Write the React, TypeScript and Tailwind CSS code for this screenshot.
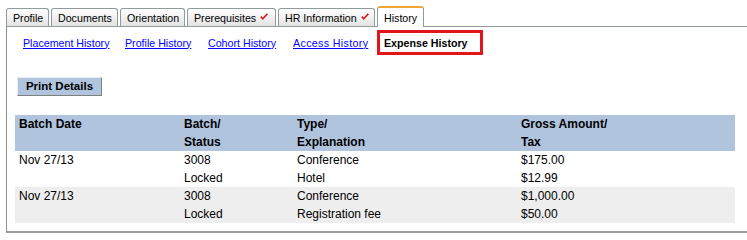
import React from 'react';

type Tab = { label: string; width: string; checked?: boolean };

const tabs: Tab[] = [
  { label: 'Profile', width: 'w-[43px]' },
  { label: 'Documents', width: 'w-[67px]' },
  { label: 'Orientation', width: 'w-[65px]' },
  { label: 'Prerequisites', width: 'w-[89px]', checked: true },
  { label: 'HR Information', width: 'w-[97px]', checked: true },
];

// widths taken from the screenshot so the red box lands in the right spot
const subLinks = [
  { label: 'Placement History', cls: 'w-[86px]' },
  { label: 'Profile History', cls: 'w-[67px]' },
  { label: 'Cohort History', cls: 'w-[69px]' },
  { label: 'Access History', cls: 'w-[75px] tracking-[0.35px]' },
];

const rows = [
  { date: 'Nov 27/13', batch: '3008', status: 'Locked', type: 'Conference', expl: 'Hotel', gross: '$175.00', tax: '$12.99' },
  { date: 'Nov 27/13', batch: '3008', status: 'Locked', type: 'Conference', expl: 'Registration fee', gross: '$1,000.00', tax: '$50.00' },
];

function Check() {
  return (
    <svg width="8" height="7" viewBox="0 0 8 7" className="ml-[4px] mt-[-2px]">
      <path d="M0.8 3.6 L2.8 5.8 L7.4 0.8" fill="none" stroke="#e0141c" strokeWidth="1.6" />
    </svg>
  );
}

export default function App() {
  return (
    <div className="w-[747px] h-[240px] bg-white font-['Liberation_Sans',Arial,sans-serif] text-black overflow-hidden">
      <div className="pt-[6px] pl-[6px]">
        {/* tab strip */}
        <div className="flex items-end gap-[2px] h-[20px] text-[10.67px]">
          {tabs.map((t) => (
            <div
              key={t.label}
              className={`${t.width} h-[18px] flex items-center pl-[6px] border border-b-0 border-[#919b9c] rounded-t-[3px] bg-linear-to-b from-white to-[#e3e3e3]`}
            >
              {t.label}
              {t.checked && <Check />}
            </div>
          ))}
          <div className="relative z-10 w-[47px] h-[21px] -mb-px flex items-center pl-[6px] border border-b-0 border-[#919b9c] border-t-2 border-t-[#f0a830] rounded-t-[3px] bg-white">
            History
          </div>
        </div>

        {/* panel */}
        <div className="border-t border-t-[#919b9c] border-l border-l-[#8e8e8e] border-b-2 border-b-[#9a9a9a] pl-[8px] pb-[8px]">
          <div className="flex items-center mt-[3px] h-[25px] pl-[8px] text-[10.67px]">
            <div className="flex gap-[16px]">
              {subLinks.map((l) => (
                <span key={l.label} className={`${l.cls} text-[#0000ff] underline whitespace-nowrap`}>
                  {l.label}
                </span>
              ))}
            </div>
            <div className="ml-[9px] h-[25px] w-[106px] flex items-center pl-[4px] border-[3px] border-[#e3141c] font-bold">
              Expense History
            </div>
          </div>

          <button className="mt-[22px] ml-[2px] h-[19px] w-[85px] bg-[#b0c4de] border border-t-[#e8edf3] border-l-[#e8edf3] border-r-[#7f7f7f] border-b-[#7f7f7f] text-[11.5px] font-bold leading-none">
            Print Details
          </button>

          <div className="mt-[18px] w-[720px] text-[12px] leading-[18px]">
            <div className="grid grid-cols-[165px_113px_224px_218px] bg-[#b0c4de] font-bold">
              <div className="pl-[4px]">Batch Date</div>
              <div className="pl-[4px]">Batch/<br />Status</div>
              <div className="pl-[4px]">Type/<br />Explanation</div>
              <div className="pl-[4px]">Gross Amount/<br />Tax</div>
            </div>
            {rows.map((r, i) => (
              <div
                key={i}
                className={`grid grid-cols-[165px_113px_224px_218px] ${i % 2 === 1 ? 'bg-[#eeeeee]' : 'bg-white'}`}
              >
                <div className="pl-[4px]">{r.date}</div>
                <div className="pl-[4px]">{r.batch}<br />{r.status}</div>
                <div className="pl-[4px]">{r.type}<br />{r.expl}</div>
                <div className="pl-[4px]">{r.gross}<br />{r.tax}</div>
              </div>
            ))}
          </div>
        </div>
      </div>
    </div>
  );
}
